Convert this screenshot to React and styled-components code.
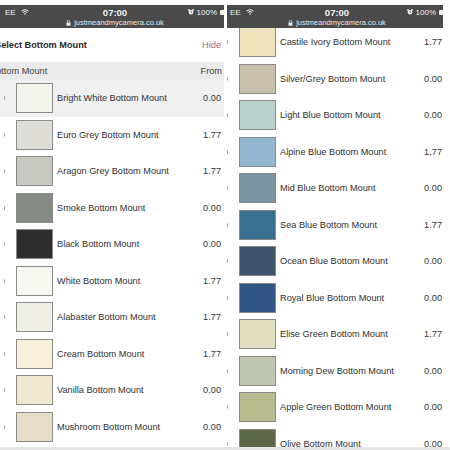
import React from 'react';
import styled, { createGlobalStyle } from 'styled-components';

const GlobalStyle = createGlobalStyle`
  html, body {
    margin: 0;
    padding: 0;
    background: #fff;
  }
  body {
    font-family: 'Liberation Sans', Arial, sans-serif;
    color: #333;
  }
`;

const leftMounts = [
  { name: 'Bright White Bottom Mount', price: '0.00', color: '#f4f4ef', selected: true },
  { name: 'Euro Grey Bottom Mount', price: '1.77', color: '#dddcd6' },
  { name: 'Aragon Grey Bottom Mount', price: '1.77', color: '#c9c9c3' },
  { name: 'Smoke Bottom Mount', price: '0.00', color: '#878b86' },
  { name: 'Black Bottom Mount', price: '0.00', color: '#2d2d2d' },
  { name: 'White Bottom Mount', price: '1.77', color: '#f7f7f2' },
  { name: 'Alabaster Bottom Mount', price: '1.77', color: '#f0efe6' },
  { name: 'Cream Bottom Mount', price: '1.77', color: '#f6f0dc' },
  { name: 'Vanilla Bottom Mount', price: '0.00', color: '#efe8d1' },
  { name: 'Mushroom Bottom Mount', price: '0.00', color: '#e7ddc8' },
];

const rightMounts = [
  { name: 'Castile Ivory Bottom Mount', price: '1.77', color: '#f0e4bf' },
  { name: 'Silver/Grey Bottom Mount', price: '0.00', color: '#c6c0ad' },
  { name: 'Light Blue Bottom Mount', price: '0.00', color: '#bad0cc' },
  { name: 'Alpine Blue Bottom Mount', price: '1.77', color: '#93b6d0' },
  { name: 'Mid Blue Bottom Mount', price: '0.00', color: '#7c93a3' },
  { name: 'Sea Blue Bottom Mount', price: '1.77', color: '#3b6f92' },
  { name: 'Ocean Blue Bottom Mount', price: '0.00', color: '#3e526a' },
  { name: 'Royal Blue Bottom Mount', price: '0.00', color: '#305585' },
  { name: 'Elise Green Bottom Mount', price: '1.77', color: '#e0e0c0' },
  { name: 'Morning Dew Bottom Mount', price: '0.00', color: '#c0c5b1' },
  { name: 'Apple Green Bottom Mount', price: '0.00', color: '#b8bb8f' },
  { name: 'Olive Bottom Mount', price: '0.00', color: '#5c6848' },
];

const Page = styled.div`
  width: 450px;
  height: 450px;
  display: flex;
  flex-direction: column;
  overflow: hidden;
`;

const Screens = styled.div`
  display: flex;
  gap: 3px;
  padding-top: 5px;
  height: 442px;
`;

const BottomEdge = styled.div`
  height: 3px;
  background: #e6e6e6;
`;

const Screen = styled.div`
  width: ${props => props.width}px;
  height: 100%;
  overflow: hidden;
  display: flex;
  flex-direction: column;
  background: #fff;
`;

const StatusBar = styled.div`
  position: relative;
  z-index: 1;
  flex: none;
  height: 23px;
  background: #4a4a4a;
  color: #f2f2f2;
  display: flex;
  flex-direction: column;
  padding-left: ${props => props.pad}px;
`;

const StatusLine = styled.div`
  display: grid;
  grid-template-columns: 1fr auto 1fr;
  align-items: center;
  height: 12px;
  padding-top: 1px;
`;

const Carrier = styled.div`
  display: flex;
  align-items: center;
  gap: 5px;
  font-size: 8px;
  margin-left: -1px;
`;

const Clock = styled.div`
  font-size: 9.5px;
  font-weight: 700;
`;

const Battery = styled.div`
  justify-self: end;
  display: flex;
  align-items: center;
  gap: 3px;
  font-size: 8px;
  margin-right: -6px;
`;

const BatteryCell = styled.span`
  display: inline-block;
  width: 10px;
  height: 5px;
  background: #f2f2f2;
  border-radius: 1px;
`;

const UrlLine = styled.div`
  display: flex;
  align-items: center;
  justify-content: center;
  gap: 3px;
  font-size: 7.5px;
  color: #e6e6e6;
  height: 9px;
`;

const Content = styled.div`
  margin-left: ${props => props.shift}px;
  margin-top: ${props => props.top || 0}px;
  width: calc(100% - ${props => props.shift}px);
`;

const TitleRow = styled.div`
  height: 34px;
  display: flex;
  align-items: center;
  justify-content: space-between;
  padding: 0 3px 0 7px;
  font-size: 9.2px;
`;

const Title = styled.div`
  font-weight: 700;
  color: #2a2a2a;
`;

const Hide = styled.div`
  color: #a8697a;
`;

const HeaderRow = styled.div`
  height: 18px;
  display: flex;
  align-items: center;
  justify-content: space-between;
  background: #ebebeb;
  padding: 0 2px 0 2px;
  font-size: 9.2px;
  color: #404040;
`;

const Row = styled.div`
  height: 36.5px;
  display: flex;
  align-items: center;
  padding: 0 ${props => props.endPad}px 0 16px;
  background: ${props => (props.selected ? '#f0f0f0' : 'transparent')};
  font-size: 9.2px;
  color: #303030;
`;

/* edge of the radio button, mostly outside the viewport */
const RadioEdge = styled.span`
  flex: none;
  width: 1px;
  height: 4px;
  border-radius: 1px;
  background: #a9a9a9;
  margin-right: 11px;
`;

const Swatch = styled.span`
  flex: none;
  width: 37px;
  height: 30px;
  box-sizing: border-box;
  border: 1px solid #8a8a86;
  background: ${props => props.color};
  margin-right: 4px;
`;

const Name = styled.span`
  flex: 1;
  white-space: nowrap;
`;

const Price = styled.span`
  color: #363636;
`;

const Wifi = () => (
  <svg width="8" height="6" viewBox="0 0 8 6">
    <path d="M0.5 2.2 A5 5 0 0 1 7.5 2.2" stroke="#f2f2f2" strokeWidth="1" fill="none" />
    <path d="M1.8 3.5 A3.2 3.2 0 0 1 6.2 3.5" stroke="#f2f2f2" strokeWidth="1" fill="none" />
    <path d="M4 6 L2.9 4.8 A1.6 1.6 0 0 1 5.1 4.8 Z" fill="#f2f2f2" />
  </svg>
);

const Alarm = () => (
  <svg width="6" height="6" viewBox="0 0 6 6">
    <circle cx="3" cy="3.3" r="2.3" fill="#f2f2f2" />
    <circle cx="1" cy="1" r="0.9" fill="#f2f2f2" />
    <circle cx="5" cy="1" r="0.9" fill="#f2f2f2" />
    <path d="M3 2.2 V3.4 H4" stroke="#4a4a4a" strokeWidth="0.6" fill="none" />
  </svg>
);

const Lock = () => (
  <svg width="5" height="6" viewBox="0 0 5 6">
    <path d="M1.2 2.6 V1.8 A1.3 1.3 0 0 1 3.8 1.8 V2.6" stroke="#e6e6e6" strokeWidth="0.8" fill="none" />
    <rect x="0.5" y="2.6" width="4" height="3.2" rx="0.4" fill="#e6e6e6" />
  </svg>
);

const PhoneStatus = ({ pad }) => (
  <StatusBar pad={pad}>
    <StatusLine>
      <Carrier>
        <span>EE</span>
        <Wifi />
      </Carrier>
      <Clock>07:00</Clock>
      <Battery>
        <Alarm />
        <span>100%</span>
        <BatteryCell />
      </Battery>
    </StatusLine>
    <UrlLine>
      <Lock />
      <span>justmeandmycamera.co.uk</span>
    </UrlLine>
  </StatusBar>
);

const MountRow = ({ mount, endPad }) => (
  <Row selected={mount.selected} endPad={endPad}>
    <RadioEdge />
    <Swatch color={mount.color} />
    <Name>{mount.name}</Name>
    <Price>{mount.price}</Price>
  </Row>
);

export default function App() {
  return (
    <Page>
      <GlobalStyle />
      <Screens>
        <Screen width={224}>
          <PhoneStatus pad={6} />
          <Content shift={-12}>
            <TitleRow>
              <Title>Select Bottom Mount</Title>
              <Hide>Hide</Hide>
            </TitleRow>
            <HeaderRow>
              <span>Bottom Mount</span>
              <span>From</span>
            </HeaderRow>
            {leftMounts.map(m => (
              <MountRow key={m.name} mount={m} endPad={3} />
            ))}
          </Content>
        </Screen>
        <Screen width={216}>
          <PhoneStatus pad={4} />
          <Content shift={-16} top={-4.25}>
            {rightMounts.map(m => (
              <MountRow key={m.name} mount={m} endPad={1} />
            ))}
          </Content>
        </Screen>
      </Screens>
      <BottomEdge />
    </Page>
  );
}
